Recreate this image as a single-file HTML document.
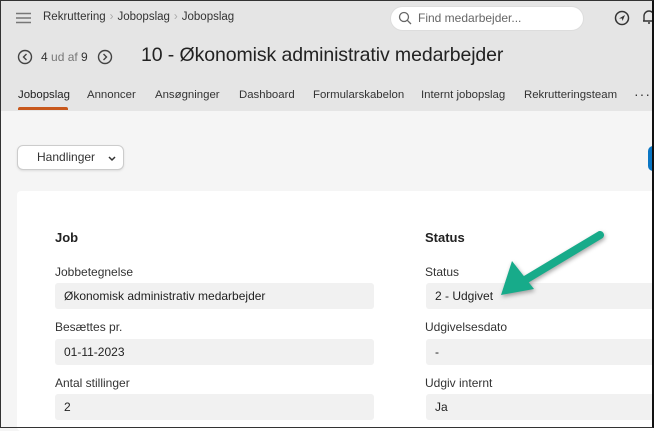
<!DOCTYPE html><html><head><style>
body{margin:0;width:654px;height:428px;overflow:hidden;font-family:"Liberation Sans",sans-serif;background:#f5f5f5;position:relative}
.frame{position:absolute;inset:0;border:1px solid #333;border-right:2px solid #111;box-sizing:border-box;pointer-events:none;z-index:9}
.hdr{position:absolute;left:0;top:0;width:654px;height:111px;background:#e5e5e5}
.t{position:absolute;white-space:nowrap;color:#333}
.tab{position:absolute;white-space:nowrap;color:#333;font-size:11.4px;top:89px}
.card{position:absolute;left:17px;top:191px;width:640px;height:240px;background:#fff;border-radius:4px}
.lbl{position:absolute;font-size:12px;color:#333}
.fld{position:absolute;height:26px;background:#f1f1f1;border-radius:3px;font-size:12px;color:#222;line-height:26px;padding-left:9px;box-sizing:border-box}
.sep{color:#aaa;margin:0 4px}
</style></head><body>
<div class="hdr"></div>
<svg style="position:absolute;left:16px;top:12px" width="16" height="12"><path d="M0 1.5H15M0 6H15M0 10.5H15" stroke="#777" stroke-width="1.6"/></svg>
<div class="t" style="left:43px;top:11px;font-size:11.5px">Rekruttering<span class="sep">›</span>Jobopslag<span class="sep">›</span>Jobopslag</div>
<div style="position:absolute;left:390px;top:6px;width:194px;height:25px;background:#fff;border:1px solid #ddd;border-radius:13px;box-sizing:border-box"></div>
<svg style="position:absolute;left:398px;top:11px" width="14" height="14"><circle cx="6" cy="6" r="4.5" fill="none" stroke="#666" stroke-width="1.3"/><path d="M9.3 9.3L13 13" stroke="#666" stroke-width="1.3"/></svg>
<div class="t" style="left:418px;top:11px;font-size:12px;color:#666">Find medarbejder...</div>
<svg style="position:absolute;left:614px;top:10px" width="16" height="16"><circle cx="8" cy="8" r="6.5" fill="none" stroke="#333" stroke-width="1.5"/><path d="M5 8.5L11 5L8.5 11L8 8.5Z" fill="#333"/></svg>
<svg style="position:absolute;left:642px;top:9px" width="14" height="16"><path d="M2 12V7A5 5 0 0 1 12 7V12H1M6 14H8" fill="none" stroke="#333" stroke-width="1.4"/></svg>
<svg style="position:absolute;left:17px;top:49px" width="16" height="16"><circle cx="8" cy="8" r="6.5" fill="none" stroke="#444" stroke-width="1.4"/><path d="M9.5 5L6.5 8L9.5 11" fill="none" stroke="#444" stroke-width="1.4"/></svg>
<div class="t" style="left:41px;top:50px;font-size:12px">4 <span style="color:#777">ud af</span> 9</div>
<svg style="position:absolute;left:97px;top:49px" width="16" height="16"><circle cx="8" cy="8" r="6.5" fill="none" stroke="#444" stroke-width="1.4"/><path d="M6.5 5L9.5 8L6.5 11" fill="none" stroke="#444" stroke-width="1.4"/></svg>
<div class="t" style="left:141px;top:44px;font-size:19.5px;color:#222;letter-spacing:-0.1px">10 - Økonomisk administrativ medarbejder</div>
<div class="tab" style="left:18px;color:#222">Jobopslag</div>
<div style="position:absolute;left:18px;top:107px;width:50px;height:3px;background:#c8581c;border-radius:2px 2px 0 0"></div>
<div class="tab" style="left:87px">Annoncer</div>
<div class="tab" style="left:155px">Ansøgninger</div>
<div class="tab" style="left:239px">Dashboard</div>
<div class="tab" style="left:313px">Formularskabelon</div>
<div class="tab" style="left:421px">Internt jobopslag</div>
<div class="tab" style="left:524px">Rekrutteringsteam</div>
<div class="t" style="left:634px;top:86px;font-size:14px;letter-spacing:1px">···</div>
<div style="position:absolute;left:17px;top:145px;width:107px;height:25px;background:#fff;border:1px solid #ccc;border-radius:6px;box-sizing:border-box;box-shadow:0 1px 2px rgba(0,0,0,.1)"></div>
<div class="t" style="left:37px;top:150px;font-size:12px">Handlinger</div>
<svg style="position:absolute;left:108px;top:156px" width="8" height="6"><path d="M1 1L4 4L7 1" fill="none" stroke="#333" stroke-width="1.5"/></svg>
<div style="position:absolute;left:648px;top:146px;width:12px;height:25px;background:#0a76c4;border-radius:5px"></div>
<div class="card"></div>
<div class="t" style="left:55px;top:230px;font-size:13px;font-weight:bold;color:#222">Job</div>
<div class="t" style="left:425px;top:230px;font-size:13px;font-weight:bold;color:#222">Status</div>
<div class="lbl" style="left:55px;top:265px">Jobbetegnelse</div>
<div class="fld" style="left:55px;top:283px;width:319px">Økonomisk administrativ medarbejder</div>
<div class="lbl" style="left:55px;top:320px">Besættes pr.</div>
<div class="fld" style="left:55px;top:339px;width:319px">01-11-2023</div>
<div class="lbl" style="left:55px;top:376px">Antal stillinger</div>
<div class="fld" style="left:55px;top:394px;width:319px">2</div>
<div class="lbl" style="left:425px;top:265px">Status</div>
<div class="fld" style="left:426px;top:283px;width:240px">2 - Udgivet</div>
<div class="lbl" style="left:425px;top:320px">Udgivelsesdato</div>
<div class="fld" style="left:426px;top:339px;width:240px">-</div>
<div class="lbl" style="left:425px;top:376px">Udgiv internt</div>
<div class="fld" style="left:426px;top:394px;width:240px">Ja</div>
<svg style="position:absolute;left:490px;top:225px;filter:drop-shadow(1px 2px 2px rgba(0,0,0,.35))" width="125" height="80"><path d="M110 10L30 58" stroke="#17ab8a" stroke-width="8" stroke-linecap="round"/><path d="M11 70L22 36L44 64Z" fill="#17ab8a"/></svg>
<div class="frame"></div>
</body></html>
